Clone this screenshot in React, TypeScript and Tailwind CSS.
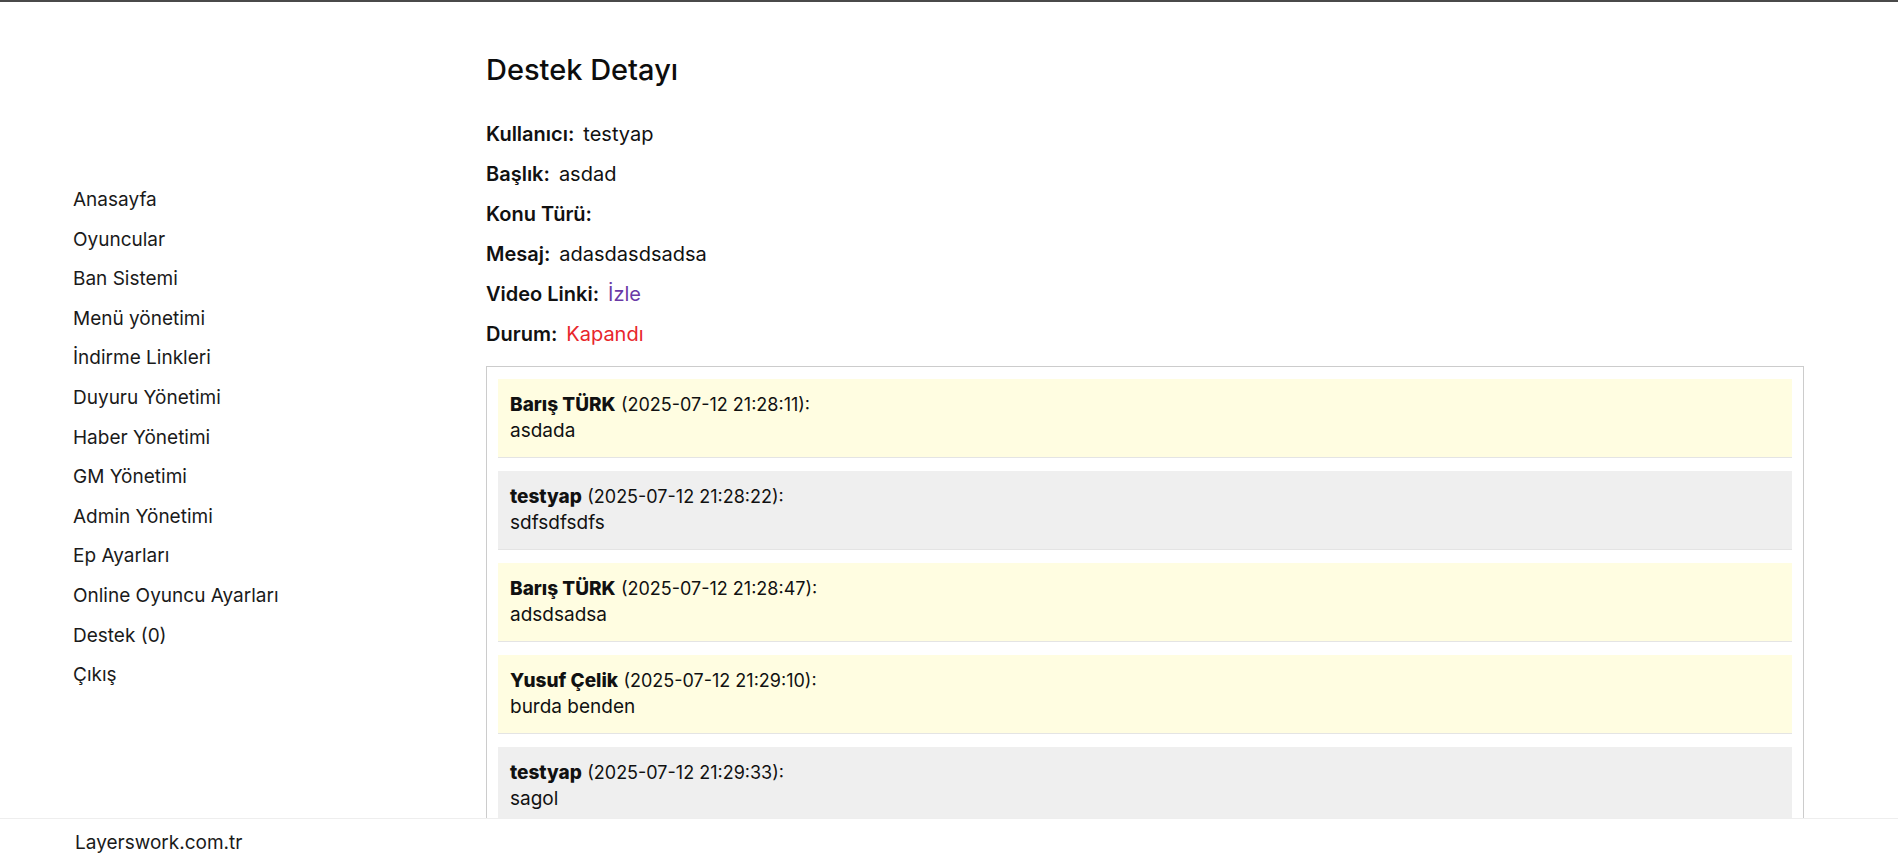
import React from "react";

const menu = [
  "Anasayfa",
  "Oyuncular",
  "Ban Sistemi",
  "Menü yönetimi",
  "İndirme Linkleri",
  "Duyuru Yönetimi",
  "Haber Yönetimi",
  "GM Yönetimi",
  "Admin Yönetimi",
  "Ep Ayarları",
  "Online Oyuncu Ayarları",
  "Destek (0)",
  "Çıkış",
];

const messages = [
  { name: "Barış TÜRK", date: "2025-07-12 21:28:11", text: "asdada", admin: true },
  { name: "testyap", date: "2025-07-12 21:28:22", text: "sdfsdfsdfs", admin: false },
  { name: "Barış TÜRK", date: "2025-07-12 21:28:47", text: "adsdsadsa", admin: true },
  { name: "Yusuf Çelik", date: "2025-07-12 21:29:10", text: "burda benden", admin: true },
  { name: "testyap", date: "2025-07-12 21:29:33", text: "sagol", admin: false },
];

export default function App() {
  return (
    <div
      className="h-[867px] w-full flex flex-col bg-white text-[#111] overflow-hidden"
      style={{ fontFamily: "Inter, 'Noto Sans', sans-serif" }}
    >
      <div className="h-[2px] bg-[#4a4a4a] shrink-0" />
      <div className="flex-1 min-h-0 overflow-hidden flex">
        <aside className="w-[486px] shrink-0 pl-[73px] pt-[178px]">
          <ul className="flex flex-col">
            {menu.map((m) => (
              <li key={m} className="text-[19px] leading-[39.6px] text-[#1a1a1a]">
                {m}
              </li>
            ))}
          </ul>
        </aside>
        <main className="w-[1318px] shrink-0">
          <h2 className="mt-[51px] text-[29px] leading-[34px] font-medium text-[#0d0d0d]">
            Destek Detayı
          </h2>
          <div className="mt-[27px] flex flex-col text-[20px]">
            <div className="leading-[40px]">
              <span className="font-semibold mr-[9px]">Kullanıcı:</span>
              <span>testyap</span>
            </div>
            <div className="leading-[40px]">
              <span className="font-semibold mr-[9px]">Başlık:</span>
              <span>asdad</span>
            </div>
            <div className="leading-[40px]">
              <span className="font-semibold mr-[9px]">Konu Türü:</span>
            </div>
            <div className="leading-[40px]">
              <span className="font-semibold mr-[9px]">Mesaj:</span>
              <span>adasdasdsadsa</span>
            </div>
            <div className="leading-[40px]">
              <span className="font-semibold mr-[9px]">Video Linki:</span>
              <span className="text-[#6b3aa6]">İzle</span>
            </div>
            <div className="leading-[40px]">
              <span className="font-semibold mr-[9px]">Durum:</span>
              <span className="text-[#e8262b]">Kapandı</span>
            </div>
          </div>
          <div className="mt-[12px] border border-[#cccccc] px-[11px] pt-[12px] pb-[12px]">
            {messages.map((msg, i) => (
              <div
                key={i}
                className={
                  (msg.admin ? "bg-[#fffde1] " : "bg-[#efefef] ") +
                  "px-[12px] py-[13px] border-b border-[#e4e4e4] mb-[13px] text-[19px] leading-[26px]"
                }
              >
                <div>
                  <span className="font-extrabold">{msg.name}</span>{" "}
                  <span className="text-[18px]">({msg.date}):</span>
                </div>
                <div>{msg.text}</div>
              </div>
            ))}
          </div>
        </main>
      </div>
      <footer className="h-[49px] shrink-0 border-t border-[#eeeeee] bg-white pl-[75px] flex items-center text-[19px] text-[#1a1a1a]">
        Layerswork.com.tr
      </footer>
    </div>
  );
}
